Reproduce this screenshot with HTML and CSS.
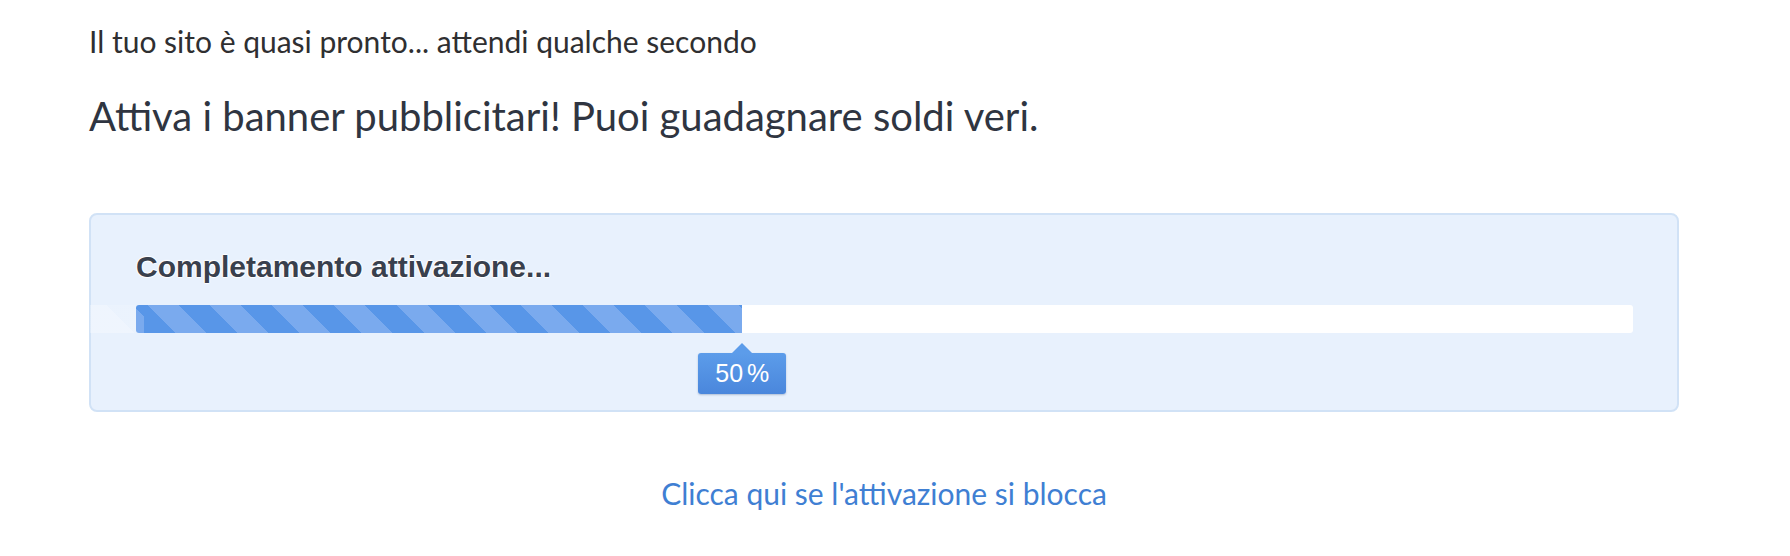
FILE: index.html
```html
<!DOCTYPE html>
<html lang="it">
<head>
<meta charset="utf-8">
<title>Attivazione</title>
<link rel="stylesheet" href="styles.css">
</head>
<body>
<main class="page">
  <p class="intro">Il tuo sito è quasi pronto... attendi qualche secondo</p>
  <h1 class="headline">Attiva i banner pubblicitari! Puoi guadagnare soldi veri.</h1>
  <section class="panel">
    <h2 class="panel-title">Completamento attivazione...</h2>
    <div class="progress">
      <div class="progress-fill" style="width: 40.5%"></div>
      <div class="progress-tip" style="left: 40.5%">50 %</div>
    </div>
  </section>
  <div class="help">
    <a class="help-link" href="#">Clicca qui se l'attivazione si blocca</a>
  </div>
</main>
</body>
</html>
```

FILE: styles.css
```css
html, body {
  margin: 0;
  padding: 0;
  background: #ffffff;
}

.page {
  width: 1590px;
  margin-left: 89px;
  padding-top: 23px;
  font-family: Lato, "Open Sans", sans-serif;
}

.intro {
  margin: 0;
  font-size: 30px;
  line-height: 36px;
  color: #2f2f31;
}

.headline {
  margin: 33px 0 0;
  font-size: 40px;
  line-height: 48px;
  font-weight: 400;
  color: #2f3541;
}

.panel {
  margin-top: 73px;
  box-sizing: border-box;
  height: 199px;
  border: 2px solid #d1e2f6;
  border-radius: 8px;
  background: #e8f1fd;
  padding: 35px 44px 0 45px;
}

.panel-title {
  margin: 0;
  font-family: "Liberation Sans", Arial, sans-serif;
  font-weight: 700;
  font-size: 30px;
  line-height: 34px;
  color: #39404d;
  text-shadow: 0 1px 1px #ffffff, 0 -1px 1px #ffffff, 1px 0 1px #ffffff, -1px 0 1px #ffffff;
}

.progress {
  position: relative;
  margin-top: 21px;
  height: 28px;
  background: #ffffff;
  border-radius: 3px;
}

.progress::before {
  content: "";
  position: absolute;
  top: 0;
  bottom: 0;
  left: -46px;
  width: 46px;
  background: linear-gradient(45deg,
    rgba(255, 255, 255, 0.3) 0 60%,
    rgba(255, 255, 255, 0.12) 60% 100%);
}

.progress-fill {
  height: 100%;
  border-radius: 3px 0 0 3px;
  background-color: #5896e8;
  background-image: repeating-linear-gradient(45deg,
    #5896e8 0 22px,
    #7aaaee 22px 44px);
  background-position: 8px 0;
}

.progress-tip {
  position: absolute;
  top: 48px;
  width: 88px;
  height: 41px;
  margin-left: -44px;
  box-sizing: border-box;
  border-radius: 3px;
  background: linear-gradient(#5c9cea, #4a87dc);
  box-shadow: 0 1px 2px rgba(40, 70, 120, 0.3);
  color: #ffffff;
  font-family: "Liberation Sans", Arial, sans-serif;
  font-size: 25px;
  word-spacing: -3px;
  line-height: 41px;
  text-align: center;
}

.progress-tip::before {
  content: "";
  position: absolute;
  left: 50%;
  top: -10px;
  margin-left: -10px;
  border-left: 10px solid transparent;
  border-right: 10px solid transparent;
  border-bottom: 10px solid #5c9cea;
}

.help {
  margin-top: 63px;
  text-align: center;
}

.help-link {
  font-size: 30px;
  line-height: 36px;
  color: #3f7fd3;
  text-decoration: none;
}
```
